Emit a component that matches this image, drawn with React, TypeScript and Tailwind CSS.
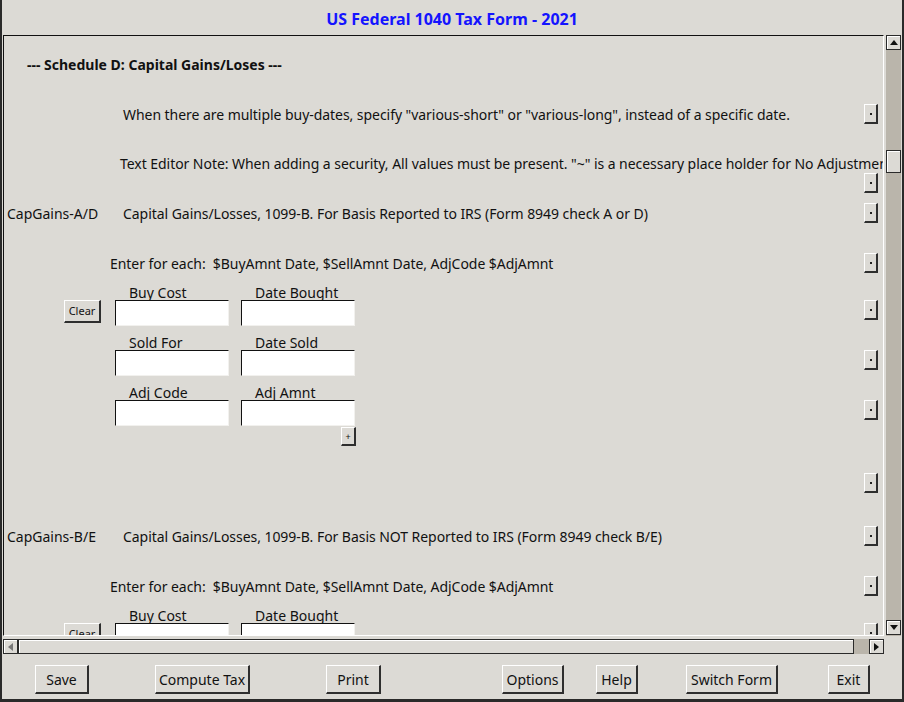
const font = { fontFamily: '"Noto Sans", "Open Sans", sans-serif' };

function Dot() {
  return (
    <div className="flex h-[20px] w-[14px] shrink-0 items-center justify-center border-t border-l border-t-white border-l-white border-r-2 border-b-2 border-r-[#2e2e2e] border-b-[#2e2e2e] bg-[#dcdad5]">
      <span className="h-[2px] w-[2px] bg-[#222]" />
    </div>
  );
}

function Entry() {
  return (
    <div className="h-[26px] w-[114px] shrink-0 border-t border-l border-t-[#111] border-l-[#111] border-r border-b border-r-[#f2f1ee] border-b-[#f2f1ee] bg-white" />
  );
}

function EntryPair({ left, right, clear }: { left: string; right: string; clear?: boolean }) {
  return (
    <div className="flex flex-col">
      <div className="flex h-[15px] items-end text-[14px] leading-[15px] text-[#111]">
        <span className="ml-[125px] w-[126px]">{left}</span>
        <span>{right}</span>
      </div>
      <div className="flex items-start">
        <div className="w-[111px] shrink-0">
          {clear && (
            <div className="ml-[60px] flex h-[23px] w-[37px] items-center justify-center border-t border-l border-t-white border-l-white border-r-2 border-b-2 border-r-[#2e2e2e] border-b-[#2e2e2e] text-[11px] text-[#111]">
              Clear
            </div>
          )}
        </div>
        <Entry />
        <div className="w-[12px] shrink-0" />
        <Entry />
        <div className="flex-1" />
        <div className="mr-[5px]">
          <Dot />
        </div>
      </div>
    </div>
  );
}

function Section({ code, text }: { code: string; text: string }) {
  return (
    <div className="flex flex-col">
      <div className="flex h-[32px] items-center text-[14px] text-[#111]">
        <span className="ml-[3px] w-[116px] whitespace-nowrap">{code}</span>
        <span className="flex-1 whitespace-nowrap tracking-[-0.05px]">{text}</span>
        <div className="mr-[5px]">
          <Dot />
        </div>
      </div>
      <div className="mt-[17px] flex h-[34px] items-center text-[14px] text-[#111]">
        <span className="ml-[106px] flex-1 whitespace-pre tracking-[-0.05px]">
          Enter for each:  $BuyAmnt Date, $SellAmnt Date, AdjCode $AdjAmnt
        </span>
        <div className="mr-[5px]">
          <Dot />
        </div>
      </div>
      <div className="mt-[5px] flex flex-col gap-[9px]">
        <EntryPair left="Buy Cost" right="Date Bought" clear />
        <EntryPair left="Sold For" right="Date Sold" />
        <EntryPair left="Adj Code" right="Adj Amnt" />
      </div>
      <div className="mt-[1px] flex h-[19px]">
        <div className="ml-[337px] flex h-[19px] w-[15px] items-center justify-center border-t border-l border-t-white border-l-white border-r-2 border-b-2 border-r-[#2e2e2e] border-b-[#2e2e2e] text-[9px] leading-none text-[#111]">
          +
        </div>
      </div>
      <div className="mt-[27px] mb-[27px] flex h-[20px] justify-end">
        <div className="mr-[5px]">
          <Dot />
        </div>
      </div>
    </div>
  );
}

function Arrow({ dir }: { dir: "up" | "down" | "left" | "right" }) {
  const tri =
    dir === "up"
      ? "border-l-[4px] border-r-[4px] border-b-[5px] border-l-transparent border-r-transparent border-b-[#111]"
      : dir === "down"
        ? "border-l-[4px] border-r-[4px] border-t-[5px] border-l-transparent border-r-transparent border-t-[#111]"
        : dir === "left"
          ? "border-t-[4px] border-b-[4px] border-r-[5px] border-t-transparent border-b-transparent border-r-[#777]"
          : "border-t-[4px] border-b-[4px] border-l-[5px] border-t-transparent border-b-transparent border-l-[#111]";
  return (
    <div className="flex h-[15px] w-[15px] shrink-0 items-center justify-center border border-[#2a2a2a] bg-[#dcdad5] shadow-[inset_1px_1px_0_#ffffff]">
      <span className={`h-0 w-0 ${tri}`} />
    </div>
  );
}

const buttons = [
  { label: "Save", ml: "ml-[33px]", w: "w-[54px]" },
  { label: "Compute Tax", ml: "ml-[66px]", w: "w-[95px]" },
  { label: "Print", ml: "ml-[76px]", w: "w-[55px]" },
  { label: "Options", ml: "ml-[121px]", w: "w-[62px]" },
  { label: "Help", ml: "ml-[32px]", w: "w-[42px]" },
  { label: "Switch Form", ml: "ml-[48px]", w: "w-[92px]" },
  { label: "Exit", ml: "ml-[50px]", w: "w-[42px]" },
];

export default function App() {
  return (
    <div
      style={font}
      className="flex h-[702px] w-[904px] flex-col overflow-hidden border-l-2 border-r-2 border-b-[3px] border-[#2a2a2a] bg-[#dcdad5]"
    >
      <div className="flex h-[35px] shrink-0 items-center justify-center pt-[3px] text-[16px] font-bold text-[#1414ff]">
        US Federal 1040 Tax Form - 2021
      </div>

      <div className="flex h-[601px] shrink-0">
        <div className="ml-[1px] h-full w-[881px] overflow-hidden border-t border-l border-t-[#111] border-l-[#111] border-r border-b border-r-white border-b-white">
          <div className="flex h-[56px] items-center pl-[23px] text-[14px] font-bold text-[#111]">
            --- Schedule D: Capital Gains/Loses ---
          </div>
          <div className="flex h-[44px] items-center text-[14px] text-[#111]">
            <span className="ml-[119px] flex-1 whitespace-nowrap tracking-[-0.05px]">
              When there are multiple buy-dates, specify "various-short" or "various-long", instead of a specific date.
            </span>
            <div className="mr-[5px]">
              <Dot />
            </div>
          </div>
          <div className="flex h-[61px] flex-col">
            <div className="mt-[18px] h-[19px] overflow-hidden whitespace-nowrap pl-[116px] text-[14px] leading-[19px] tracking-[-0.05px] text-[#111]">
              Text Editor Note: When adding a security, All values must be present. "~" is a necessary place holder for No Adjustment.
            </div>
            <div className="mr-[5px] self-end">
              <Dot />
            </div>
          </div>
          <Section
            code="CapGains-A/D"
            text="Capital Gains/Losses, 1099-B. For Basis Reported to IRS (Form 8949 check A or D)"
          />
          <Section
            code="CapGains-B/E"
            text="Capital Gains/Losses, 1099-B. For Basis NOT Reported to IRS (Form 8949 check B/E)"
          />
        </div>
        <div className="ml-[2px] flex w-[15px] flex-col bg-[#bab5ab]">
          <Arrow dir="up" />
          <div className="mt-[100px] h-[23px] w-[15px] border border-[#2a2a2a] bg-[#dcdad5] shadow-[inset_1px_1px_0_#ffffff]" />
          <div className="flex-1" />
          <div className="mb-[1px]">
            <Arrow dir="down" />
          </div>
        </div>
      </div>

      <div className="flex h-[21px] shrink-0 items-start pt-[3px]">
        <div className="ml-[1px] flex h-[15px] w-[881px] bg-[#bab5ab]">
          <Arrow dir="left" />
          <div className="h-[15px] flex-1 border border-[#2a2a2a] bg-[#dcdad5] shadow-[inset_1px_1px_0_#ffffff]" />
          <div className="w-[15px]" />
          <Arrow dir="right" />
        </div>
      </div>

      <div className="flex flex-1 items-start pt-[8px]">
        {buttons.map((b) => (
          <div
            key={b.label}
            className={`${b.ml} ${b.w} flex h-[29px] shrink-0 items-center justify-center border-t border-l border-t-white border-l-white border-r-2 border-b-2 border-r-[#2e2e2e] border-b-[#2e2e2e] text-[14px] text-[#111]`}
          >
            {b.label}
          </div>
        ))}
      </div>
    </div>
  );
}
